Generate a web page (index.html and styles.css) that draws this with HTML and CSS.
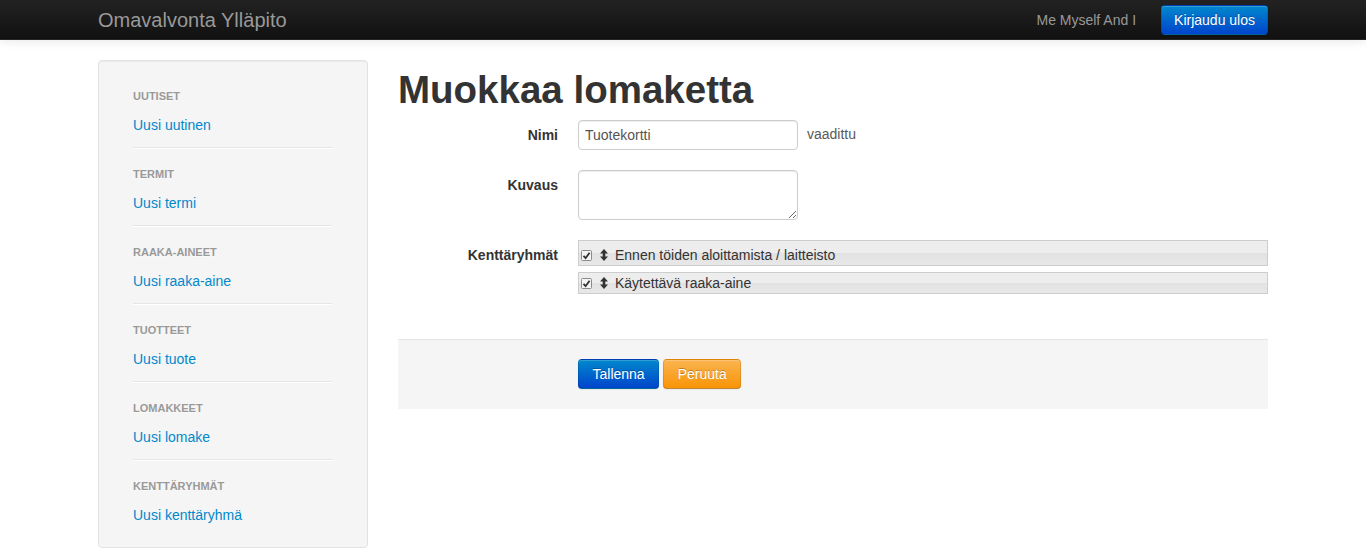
FILE: index.html
```html
<!DOCTYPE html>
<html lang="fi">
<head>
<meta charset="utf-8">
<title>Muokkaa lomaketta</title>
<link rel="stylesheet" href="styles.css">
</head>
<body>
<div class="navbar">
  <div class="container nav-inner">
    <a class="brand" href="#">Omavalvonta Ylläpito</a>
    <div class="nav-right">
      <span class="navbar-text">Me Myself And I</span>
      <a class="btn btn-primary" href="#">Kirjaudu ulos</a>
    </div>
  </div>
</div>
<div class="container main">
  <aside class="well">
    <ul class="nav-list">
      <li class="nav-header">Uutiset</li>
      <li class="nav-link"><a href="#">Uusi uutinen</a></li>
      <li class="divider"></li>
      <li class="nav-header">Termit</li>
      <li class="nav-link"><a href="#">Uusi termi</a></li>
      <li class="divider"></li>
      <li class="nav-header">Raaka-aineet</li>
      <li class="nav-link"><a href="#">Uusi raaka-aine</a></li>
      <li class="divider"></li>
      <li class="nav-header">Tuotteet</li>
      <li class="nav-link"><a href="#">Uusi tuote</a></li>
      <li class="divider"></li>
      <li class="nav-header">Lomakkeet</li>
      <li class="nav-link"><a href="#">Uusi lomake</a></li>
      <li class="divider"></li>
      <li class="nav-header">Kenttäryhmät</li>
      <li class="nav-link"><a href="#">Uusi kenttäryhmä</a></li>
    </ul>
  </aside>
  <section class="content">
    <h1>Muokkaa lomaketta</h1>
    <form class="form-horizontal">
      <div class="control-group">
        <label class="control-label">Nimi</label>
        <div class="controls">
          <input class="text-input" type="text" value="Tuotekortti"><span class="help-inline">vaadittu</span>
        </div>
      </div>
      <div class="control-group">
        <label class="control-label">Kuvaus</label>
        <div class="controls">
          <textarea class="text-area"></textarea>
        </div>
      </div>
      <div class="control-group">
        <label class="control-label">Kenttäryhmät</label>
        <div class="controls">
          <ul class="sortable">
            <li class="sort-item first">
              <svg class="cb" width="13" height="13" viewBox="0 0 13 13"><rect x="1.5" y="1.5" width="10" height="10" rx="1" fill="#f4f4f4" stroke="#8a8a8a"/><path d="M3.5 6.8 L5.6 9 L9.6 3.8" fill="none" stroke="#333" stroke-width="1.8"/></svg>
              <svg class="arrows" width="8" height="12" viewBox="0 0 8 12"><path d="M4 0 L8 4.5 L5.3 4.5 L5.3 7.5 L8 7.5 L4 12 L0 7.5 L2.7 7.5 L2.7 4.5 L0 4.5 Z" fill="#333"/></svg>
              <span>Ennen töiden aloittamista / laitteisto</span>
            </li>
            <li class="sort-item">
              <svg class="cb" width="13" height="13" viewBox="0 0 13 13"><rect x="1.5" y="1.5" width="10" height="10" rx="1" fill="#f4f4f4" stroke="#8a8a8a"/><path d="M3.5 6.8 L5.6 9 L9.6 3.8" fill="none" stroke="#333" stroke-width="1.8"/></svg>
              <svg class="arrows" width="8" height="12" viewBox="0 0 8 12"><path d="M4 0 L8 4.5 L5.3 4.5 L5.3 7.5 L8 7.5 L4 12 L0 7.5 L2.7 7.5 L2.7 4.5 L0 4.5 Z" fill="#333"/></svg>
              <span>Käytettävä raaka-aine</span>
            </li>
          </ul>
        </div>
      </div>
      <div class="form-actions">
        <a class="btn btn-primary btn-form" href="#">Tallenna</a>
        <a class="btn btn-warning btn-form" href="#">Peruuta</a>
      </div>
    </form>
  </section>
</div>
</body>
</html>
```

FILE: styles.css
```css
* { box-sizing: border-box; }
body {
  margin: 0;
  background: #fff;
  font-family: "Liberation Sans", Arial, sans-serif;
  font-size: 14px;
  line-height: 20px;
  color: #333;
}
a { text-decoration: none; }
.container { width: 1170px; margin: 0 auto; }

.navbar {
  height: 40px;
  background: linear-gradient(#222222, #111111);
  border-bottom: 1px solid #252525;
  box-shadow: 0 1px 10px rgba(0,0,0,.1);
}
.nav-inner {
  display: flex;
  align-items: center;
  justify-content: space-between;
  height: 40px;
}
.brand {
  font-size: 20px;
  line-height: 20px;
  color: #999;
  padding: 9px 0 10px;
}
.nav-right { display: flex; align-items: center; gap: 25px; }
.navbar-text { color: #999; line-height: 40px; }

.btn {
  display: inline-block;
  padding: 4px 12px;
  font-size: 14px;
  line-height: 20px;
  color: #fff;
  text-shadow: 0 -1px 0 rgba(0,0,0,.25);
  border: 1px solid;
  border-color: rgba(0,0,0,.1) rgba(0,0,0,.1) rgba(0,0,0,.25);
  border-radius: 4px;
  box-shadow: inset 0 1px 0 rgba(255,255,255,.2), 0 1px 2px rgba(0,0,0,.05);
}
.btn-form { padding-left: 13.5px; padding-right: 13.5px; }
.btn-primary { background: linear-gradient(#0088cc, #0044cc); }
.btn-warning { background: linear-gradient(#fbb450, #f89406); }

.main {
  display: flex;
  gap: 30px;
  padding-top: 20px;
  align-items: flex-start;
}
.well {
  width: 270px;
  flex: none;
  background: #f5f5f5;
  border: 1px solid #e3e3e3;
  border-radius: 4px;
  box-shadow: inset 0 1px 1px rgba(0,0,0,.05);
  padding: 25px 19px 22px 34px;
}
.nav-list { list-style: none; margin: 0; padding: 0; }
.nav-header {
  font-size: 11px;
  font-weight: bold;
  line-height: 20px;
  color: #999;
  text-transform: uppercase;
  text-shadow: 0 1px 0 rgba(255,255,255,.5);
}
.nav-link { margin-top: 9px; line-height: 20px; }
.nav-link a { color: #0088cc; }
.divider {
  width: 199px;
  height: 2px;
  background: #e5e5e5;
  border-bottom: 1px solid #fff;
  margin: 12px 0 15px;
}

.content { width: 870px; flex: none; }
h1 {
  margin: 10px 0 10px;
  font-size: 38.5px;
  line-height: 40px;
  font-weight: bold;
  color: #333;
}
.form-horizontal { margin: 0; }
.control-group {
  display: grid;
  grid-template-columns: 160px 1fr;
  column-gap: 20px;
  margin-bottom: 20px;
}
.control-label {
  text-align: right;
  font-weight: bold;
  padding-top: 5px;
  line-height: 20px;
}
.controls { display: flex; align-items: flex-start; }
.text-input, .text-area {
  width: 220px;
  padding: 4px 6px;
  font-family: inherit;
  font-size: 14px;
  line-height: 20px;
  color: #555;
  border: 1px solid #ccc;
  border-radius: 4px;
  box-shadow: inset 0 1px 1px rgba(0,0,0,.075);
  background: #fff;
  margin: 0;
}
.text-input { height: 30px; }
.text-area { height: 50px; resize: vertical; display: block; }
.help-inline { padding-left: 9px; line-height: 28px; color: #595959; }

.sortable { list-style: none; margin: 0; padding: 0; width: 690px; }
.sort-item {
  display: flex;
  align-items: center;
  height: 22px;
  border: 1px solid #cdcdcd;
  background: linear-gradient(#ededed 0, #ededed 50%, #e2e2e2 50%, #e8e8e8 100%);
  padding-left: 1px;
  color: #333;
}
.sort-item.first { height: 26px; padding-top: 4px; margin-bottom: 6px; }
.cb { flex: none; }
.arrows { flex: none; margin-left: 7px; margin-right: 7px; }

.form-actions {
  margin-top: 45px;
  background: #f5f5f5;
  border-top: 1px solid #e5e5e5;
  padding: 19px 20px 20px 180px;
  display: flex;
  gap: 4px;
}
```
